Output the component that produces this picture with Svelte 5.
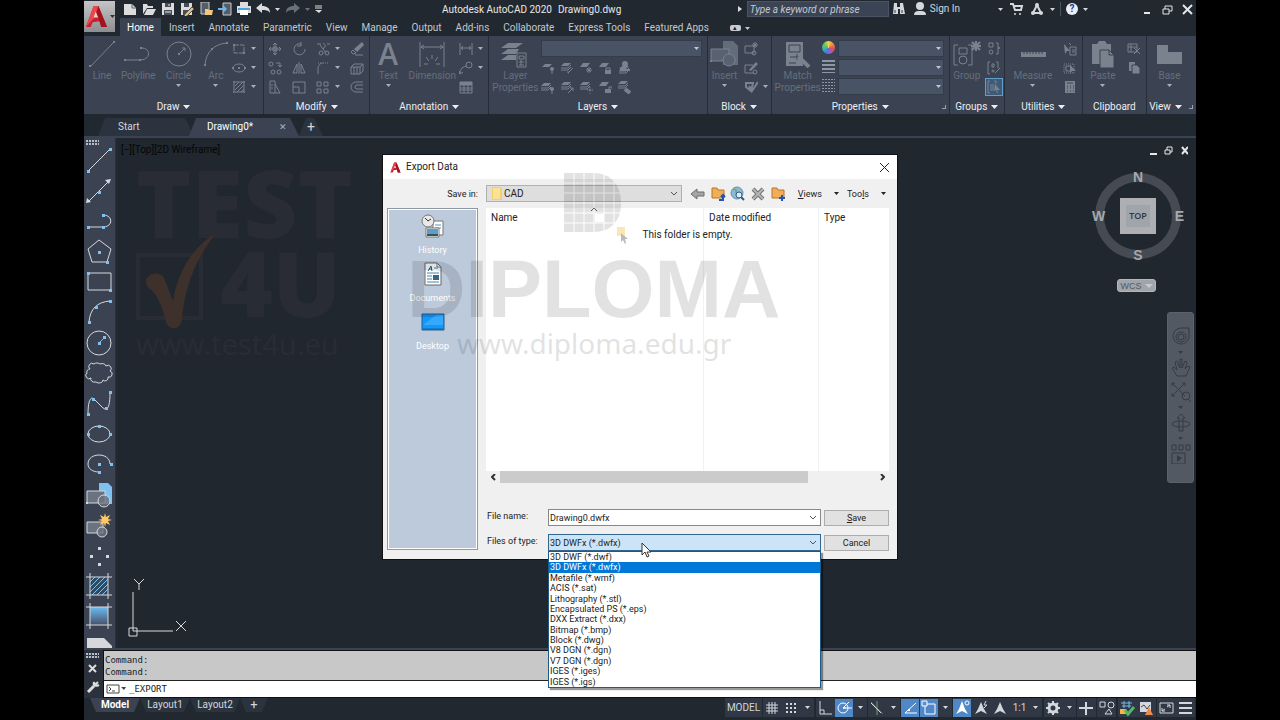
<script>
  const f = 'fill="currentColor" stroke="none"';
  const dot = (x, y) => `<rect x="${x - 1}" y="${y - 1}" width="2" height="2" ${f}/>`;
  const blue = (x, y) => `<rect x="${x - 1}" y="${y - 1}" width="3" height="3" fill="#7fc1f0" stroke="none"/>`;
  const sheet = (x, y) => `<path d="M${x + 3} ${y}h7l-3 3h-7z" ${f}/><path d="M${x} ${y + 5}h7l3-3M${x} ${y + 7}h7l3-3"/>`;

  // every drawing is in the pixel grid of the size it is shown at
  const icons = {
    // quick access, 14 x 14
    new: `<path d="M1 2h8l4 4v7H1z" ${f}/><path d="M9 2v4h4" stroke="#59616c"/>`,
    open: `<path d="M1 12V2h4l1 2h5v2H5z" ${f}/><path d="M5 7h9l-3 6H2z" ${f}/>`,
    save: `<path d="M1 1h12v12H1z" ${f}/><path d="M4 1h6v4H4zM3 8h8v5H3z" fill="#454d57" stroke="none"/><path d="M4 10h6M8 2v2" stroke="#eee"/>`,
    saveas: `<path d="M1 1h11v12H1z" ${f}/><path d="M4 1h5v4H4zM3 8h6v5H3z" fill="#454d57" stroke="none"/><path d="M5 12l7-7 2 2-7 7-3 1z" fill="#f0bd69" stroke="#555"/>`,
    openweb: `<path d="M2 0h8v12H2z" fill="#555d67" stroke="#ccc"/><path d="M6 13V7h3l1 1h4l-1 5z" fill="#f3c77f" stroke="none"/>`,
    saveweb: `<path d="M5 1h8v12H5z" fill="#555d67" stroke="#ccc"/><path d="M0 6h5V3l4 4-4 4V8H0z" fill="#68b7ef" stroke="none"/>`,
    plot: `<path d="M3 0h8v4H3zM0 4h14v7H0z" ${f}/><path d="M3 8h8v5H3z" fill="#fff" stroke="none"/><path d="M1 7h12" stroke="#4aa3df" stroke-width="2"/>`,
    undo: `<path d="M0 6l6-5v3c5 0 8 2 8 7-2-3-4-3-8-3v3z" ${f}/>`,
    redo: `<path d="M14 6L8 1v3C3 4 0 6 0 11c2-3 4-3 8-3v3z" ${f}/>`,
    custom: `<path d="M4 4h7M4 6h7"/><path d="M4 8h7l-3 3z" ${f}/>`,
    // large ribbon tools, 32 x 28
    line: `<path d="M5 26L27 3"/>${dot(4, 26)}${dot(28, 2)}`,
    polyline: `<path d="M3 20h15c11 0 11-12 2-12"/>${dot(3, 20)}${dot(18, 20)}${dot(19, 8)}`,
    circle: `<circle cx="16" cy="14" r="12"/><path d="M16 14l6-6m-3 0h3v3"/>${dot(16, 14)}`,
    arc: `<path d="M5 25C6 12 14 4 27 3"/>${dot(5, 25)}${dot(12, 9)}${dot(27, 3)}`,
    dimension: `<path d="M4 2v25M28 2v25M5 7h22M8 5L5 7l3 2m16-4l3 2-3 2M16 15v4m-6-2l3 4m9-4l-3 4m-11 3h4m8 0h4" />`,
    layerprops: `<path d="M9 3h15l-7 5H2zM9 9h11l-3 5H2zM9 15h8v5H2z" ${f}/><path d="M18 13h9v14h-9z" fill="#3b4353"/><path d="M20 16h5v3h-5zM20 22h5m-3-2v5m-2 0h5"/>`,
    insert: `<path d="M14 1h10l5 5v19H14z" ${f} opacity=".65"/><path d="M2 9h18v12H2z" fill="#596273"/><circle cx="20" cy="20" r="6" fill="#596273"/>${dot(2, 21)}`,
    match: `<path d="M4 2h17v24H4z" ${f}/><path d="M7 5h11v7H7zM8 17h9m-2-3v6m-8 3h7" stroke="#3b4353" fill="none"/><path d="M16 17l5 4 6 6" stroke-width="4"/>`,
    group: `<path d="M7 5H3v20h4M17 5h4v20h-4M8 8h8v6H8z"/><path d="M25 1v10M20 6h10M21 2l8 8m0-8l-8 8" stroke-width="2"/><circle cx="12" cy="20" r="4"/>`,
    measure: `<path d="M4 12h25v5H4z" ${f}/><path d="M7 12v2m3-2v2m3-2v2m3-2v2m3-2v2m3-2v2m3-2v2" stroke="#3b4353"/>`,
    paste: `<path d="M5 4h5l2-3h6l2 3h4v20H5z" ${f}/><path d="M13 10h9l5 5v13H13z" fill="currentColor" stroke="#3b4353"/><path d="M22 10v5h5" stroke="#3b4353"/>`,
    base: `<path d="M4 5h11v7h14v12H4z" ${f}/>`,
    // small ribbon tools, 14 x 14
    rect: `<path d="M2 3h10v8H2z" stroke-dasharray="5 1"/>${dot(2, 3)}${dot(12, 11)}`,
    ellipse: `<ellipse cx="7" cy="7" rx="6" ry="4"/>${dot(7, 7)}${dot(1, 7)}${dot(13, 7)}`,
    hatch: `<path d="M2 1v12M12 1v12M1 2h12M1 12h12M3 6l4-4M3 10l8-8M5 12l7-7M9 12l3-3"/>`,
    move: `<path d="M7 1v12M1 7h12M5 3l2-2 2 2M5 11l2 2 2-2M3 5L1 7l2 2M11 5l2 2-2 2M5 5h4v4H5z"/>`,
    rotate: `<path d="M9 2a5.500 5.500 0 1 0 4 5M9 0v4h-4"/>`,
    trim: `<path d="M1 2h4m2 0h2m2 0h3M4 3l6 8M10 3L7 7"/><circle cx="5" cy="11" r="2"/><circle cx="11" cy="11" r="2"/>`,
    erase: `<path d="M12 0l2 3-7 7-3-3z" ${f}/><path d="M3 8l3 3-3 1-2-2zM5 13h8"/>`,
    copy: `<circle cx="3" cy="3" r="2"/><circle cx="5" cy="11" r="2"/><circle cx="11" cy="11" r="2"/><path d="M8 2h4v4M10 4l2 2 2-2"/>`,
    mirror: `<path d="M5 3v9H1zM9 3v9h4zM7 1v12"/>`,
    fillet: `<path d="M2 13V8c0-4 2-6 6-6" /><path d="M9 2h4M2 2h3" stroke-dasharray="1 1"/>`,
    explode: `<path d="M1 6l3-3h9v7l-3 3H1zM1 6h9v7M10 6l3-3M4 6v7m3-7v7"/>`,
    stretch: `<path d="M2 1h5v12H2zM7 4l5 9H7"/><path d="M4 4v6" stroke-dasharray="2 1"/>`,
    scale: `<path d="M1 2h12v11H1zM1 7h6v6"/>`,
    array: `<path d="M1 2h4v4H1zM8 2h4v4H8zM1 9h4v4H1zM8 9h4v4H8z"/>`,
    offset: `<path d="M13 2H6a5 5 0 0 0 0 10h7M13 5H7a2 2 0 0 0 0 4h6"/>`,
    linear: `<path d="M1 1v12M13 1v12M2 6h10M4 4L2 6l2 2m6-4l2 2-2 2"/>`,
    leader: `<path d="M1 13c0-6 3-7 7-8M1 13l-1-3m1 3l3-2"/><circle cx="10" cy="4" r="3"/>`,
    table: `<path d="M1 2h12v11H1zM1 5h12M1 8h12M1 10h12M5 5v8M9 5v8"/><path d="M1 2h12v3H1z" ${f}/>`,
    lay1: `<path d="M4 3h7L8 6H1z" ${f}/><circle cx="11" cy="8" r="2" ${f}/><path d="M11 10v3"/>`,
    lay2: `${sheet(1, 2)}<path d="M8 12l5-5m-4 5H8v-2"/>`,
    lay3: `<path d="M4 2h7L8 6H1z" ${f}/><path d="M10 6v6M7 9h6M8 7l4 4m0-4l-4 4"/>`,
    lay4: `<path d="M4 2h7L8 6H1z" ${f}/><path d="M7 9h6v4H7z" ${f}/><path d="M8 9V7h4v2"/>`,
    lay5: `${sheet(2, 5)}<circle cx="8" cy="3" r="3" ${f}/><path d="M3 9h10" stroke-width="2"/>`,
    lay6: `${sheet(0, 3)}<circle cx="11" cy="9" r="2" ${f}/><path d="M11 11v3"/>`,
    lay7: `${sheet(1, 2)}<path d="M8 13l5-5m0 3V8h-3"/>`,
    lay8: `${sheet(1, 2)}<circle cx="11" cy="10" r="1"/><path d="M11 7v1m0 5v1m-3-4h1m4 0h1"/>`,
    lay9: `<path d="M4 2h7L8 6H1z" ${f}/><path d="M7 9h6v4H7z" ${f}/><path d="M11 9V7h3v2"/>`,
    lay10: `${sheet(1, 1)}<path d="M8 9l5 4" stroke-width="4"/>`,
    blkCreate: `<path d="M1 4h9v7H1z"/><circle cx="10" cy="11" r="2"/><path d="M11 0v6M8 3h6M9 1l4 4m0-4L9 5"/>`,
    blkEdit: `<path d="M9 4H1v8h9"/><path d="M5 9l7-8 2 2-7 7z" ${f}/><circle cx="11" cy="11" r="2"/>`,
    blkAttr: `<path d="M2 3h7l-2 8-5-4zM5 6l3 5 6-9" stroke-width="2"/>`,
    ungroup: `<path d="M2 1h4v4H2zM9 1h2v5h2-2v6H9"/><circle cx="4" cy="10" r="2"/>`,
    groupEdit: `<path d="M3 1H1v12h2M9 1h2v6M5 3h2v3H5zM8 12l5-5"/><circle cx="6" cy="10" r="1"/>`,
    groupSel: `<path d="M3 1H1v12h2M7 1h2v3M4 4v7m2-7v7"/><path d="M8 4l5 6-3 0 1 3-1 0-1-3-2 1z" ${f}/>`,
    quicksel: `<path d="M1 2l6 7H4l-2 3z" ${f}/><path d="M7 5h6v8H7zM9 8h3m-3 2h3M6 1l2 2"/>`,
    selall: `<path d="M1 3h10v9H1z" stroke-dasharray="1 1"/><path d="M3 5h5v5H3z"/><path d="M7 4l6 6H9l-2 3z" ${f}/>`,
    calc: `<path d="M2 1h10v12H2z" ${f}/><path d="M4 3h6M4 6h1m2 0h1m2 0h1M4 8h1m2 0h1m2 0h1M4 11h1m2 0h1m2 0h1" stroke="#3b4353"/>`,
    cut: `<path d="M1 2h9v8H1zM1 5h9M4 2v8M7 6l6 6m0-6l-6 6"/>`,
    copyclip: `<path d="M2 1h6v9H2z" ${f}/><path d="M5 4h5l3 3v6H5z" fill="currentColor" stroke="#3b4353"/>`,
    // drawing toolbar, 28 x 26
    tLine: `<path d="M3 24L25 2"/>${blue(3, 24)}${blue(25, 2)}`,
    tXline: `<path d="M4 23L23 4"/><path d="M26 1l-2 5-4-4zM1 25l1-5 4 4z" ${f}/>${blue(14, 14)}`,
    tPline: `<path d="M3 19h16c9-1 9-11 0-12"/>${blue(3, 19)}${blue(18, 19)}${blue(18, 7)}`,
    tPolygon: `<path d="M14 2l12 9-4 13H7L3 11z"/>${blue(14, 14)}${blue(22, 24)}`,
    tRect: `<path d="M3 4h23v17H3z"/>${blue(3, 4)}${blue(25, 21)}`,
    tArc: `<path d="M4 23C5 10 12 3 25 2"/>${blue(4, 23)}${blue(11, 8)}${blue(25, 2)}`,
    tCircle: `<circle cx="14" cy="13" r="12"/><path d="M14 13l6-6" stroke="#7fc1f0"/>${blue(14, 13)}${blue(19, 7)}`,
    tCloud: `<path d="M5 9a3 3 0 0 1 4-5 4 3 0 0 1 6 0 4 3 0 0 1 6 2 3 3 0 0 1 4 5 3 3 0 0 1-2 6 3 3 0 0 1-5 3 4 3 0 0 1-7 2 4 3 0 0 1-5-4 3 3 0 0 1-4-5 3 3 0 0 1 3-4z"/>`,
    tSpline: `<path d="M3 24C3 10 6 6 9 9l8 8c5 5 8 1 8-14"/>${blue(3, 24)}${blue(8, 9)}${blue(21, 18)}${blue(25, 2)}`,
    tEllipse: `<ellipse cx="14" cy="13" rx="11" ry="8"/>${blue(3, 13)}${blue(14, 5)}${blue(25, 13)}`,
    tEllArc: `<path d="M25 13C25 1 3 1 3 13c0 5 5 8 11 8"/>${blue(14, 13)}${blue(14, 21)}${blue(26, 13)}`,
    tInsert: `<path d="M14 1h9l4 4v17H14z" fill="#7fc1f0" stroke="none"/><path d="M2 9h18v12H2z" fill="#6c7380"/><circle cx="19" cy="19" r="6" fill="#6c7380" fill-opacity=".8"/>${dot(2, 21)}`,
    tBlock: `<path d="M2 10h16v11H2z" fill="#6c7380"/><circle cx="17" cy="20" r="5" fill="#6c7380" fill-opacity=".8"/><path d="M20 1l1 4 4-2-2 4 4 1-4 1 2 4-4-2-1 4-1-4-4 2 2-4-4-1 4-1-2-4 4 2z" fill="#ffc766" stroke="none"/>`,
    tPoint: [[14, 5], [6, 13], [22, 13], [14, 21]].map(([x, y]) => `<rect x="${x - 1}" y="${y - 1}" width="3" height="3" ${f}/>`).join(''),
    tHatch: `<path d="M5 4h18v18H5z" fill="#2d4b63" stroke="none"/><path d="M5 9l5-5M5 14L15 4M5 19L20 4M7 22L23 6M12 22l11-11M17 22l6-6" stroke="#7fc1f0"/><path d="M5 0v26M23 0v26M1 4h26M1 22h26"/>`,
    tGradient: `<defs><linearGradient id="tg" x2="0" y2="1"><stop stop-color="#6cbcf2"/><stop offset="1" stop-color="#47506a"/></linearGradient></defs><path d="M5 4h18v18H5z" fill="url(#tg)" stroke="none"/><path d="M5 0v26M23 0v26M1 4h26M1 22h26"/>`,
    tRegion: `<path d="M2 4h17l8 8v14h-8a5 5 0 0 0-10 0H2z" ${f}/>`,
    // status bar, 18 x 18
    grid: `<path d="M6 3v12M9 3v12M12 3v12M3 6h12M3 9h12M3 12h12"/>`,
    snap: [4, 8, 12].map((y) => [4, 8, 12].map((x) => dot(x + 1, y + 1)).join('')).join(''),
    ortho: `<path d="M4 2v13h12M4 11h4v4"/>`,
    polar: `<circle cx="8" cy="9" r="5"/><path d="M8 9h9M8 9l6-6M8 9h3"/>`,
    iso: `<path d="M3 3l12 12" stroke="#8a6a6e"/><path d="M9 2v14" stroke="#5fa564"/><path d="M3 4l10 10"/>`,
    track: `<path d="M15 4L4 14h12"/>${dot(8, 11)}`,
    osnap: `<path d="M5 5h10v10H5z"/><path d="M2 2h5v5H2z" fill="#5a92cf"/>`,
    ann: `<path d="M9 2l3 8 3 5-6-3-6 3 3-5z" ${f}/><circle cx="14" cy="4" r="2"/>`,
    ann2: `<path d="M9 3l3 7 3 5-6-3-6 3 3-5z" ${f}/><path d="M14 2l-2 4h3l-3 3"/>`,
    ann3: `<path d="M9 3l3 7 3 5-6-3-6 3 3-5z" ${f}/>`,
    gear: `<circle cx="9" cy="9" r="4" stroke-width="3"/><path d="M9 2v3m0 8v3M2 9h3m8 0h3M4 4l2 2m6 6l2 2m0-10l-2 2m-6 6l-2 2" stroke-width="2"/>`,
    plus: `<path d="M9 3v13M2 9h14" stroke-width="2"/>`,
    isolate: `<path d="M3 3h5v5H3zM8 15l4-5 3 5z"/><circle cx="14" cy="6" r="3"/>`,
    hardware: `<path d="M3 4h11M4 7h9M6 2v7m5-7v7" stroke="#74b8ee"/><path d="M2 10h6v5H2z" fill="#f3b54a" stroke="none"/><path d="M7 11l3 4 6-7" stroke="#54b567" stroke-width="3"/>`,
    perf: `<path d="M3 3h11v10H3z" ${f}/><path d="M4 8l3-2 3 4 3-4" stroke="#444"/><path d="M12 8l4 8H8z" fill="#ef8b42" stroke="none"/>`,
    clean: `<path d="M3 4h13v10H3zM10 8l3-2m0 3V6h-3M8 10l-3 2m0-3v3h3"/>`,
    menu: `<path d="M3 4h13M3 9h13M3 14h13" stroke-width="2"/>`,
    // navigation bar, 20 x 20
    wheel: `<path d="M10 1h8v9a8 8 0 1 1-8-9z"/><circle cx="10" cy="10" r="5"/><circle cx="10" cy="10" r="3"/>`,
    pan: `<path d="M6 18L1 10l2-1 3 3L4 4l2-1 3 7V1h2v9l3-7 2 1-2 7 3-3 2 1-4 9z"/>`,
    zoom: `<path d="M1 1l13 13M14 1L1 14M1 4V1h3m7 0h3v3M1 11v3h3M17 17l3 3"/><circle cx="15" cy="14" r="4"/>`,
    orbit: `<ellipse cx="10" cy="11" rx="9" ry="3"/><path d="M8 18V5H6l4-4 4 4h-2v13z"/>`,
    motion: `<path d="M1 1h4v5H1zM8 1h4v5H8zM15 1h4v5h-4zM1 9h13v11H1z"/><path d="M6 11l5 3-5 4z" ${f}/>`,
    // title bar right and dialog, 16 x 16
    find: `<path d="M3 2h3v4h3V2h3l2 11h-5V8H7v5H2z" ${f}/><path d="M4 9v3m7-3v3" stroke="#333b45"/>`,
    user: `<circle cx="8" cy="5" r="4" ${f}/><path d="M2 14c0-3 2-4 4-4h4c2 0 4 1 4 4z" ${f}/>`,
    cart: `<path d="M2 3h3l2 6h6l1-4H5" stroke-width="2"/><circle cx="7" cy="13" r="1" ${f}/><circle cx="12" cy="13" r="1" ${f}/>`,
    a360: `<path d="M8 4l4 8H4z" stroke-width="2"/><circle cx="8" cy="4" r="2" ${f}/><circle cx="4" cy="12" r="2" ${f}/><circle cx="12" cy="12" r="2" ${f}/>`,
    back: `<path d="M1 8l6-5v3h7v4H7v3z" fill="#a5a5a5" stroke="#6d6d6d"/>`,
    up: `<path d="M2 12V2h5l1 2h6v8z" fill="#f2ad55" stroke="#b5762a"/><path d="M9 14h4v-4m-2 1l2-2 2 2" stroke="#2355b8" stroke-width="2"/>`,
    web: `<circle cx="7" cy="7" r="6" fill="#8db9d6" stroke="#6a8ea6"/><path d="M3 4c3-2 4 2 3 4" stroke="#7aa887" stroke-width="2"/><circle cx="9" cy="9" r="3" fill="#d7edfb" stroke="#31588b"/><path d="M11 11l3 3" stroke="#31588b" stroke-width="2"/>`,
    del: `<path d="M3 3l10 10M13 3L3 13" stroke="#707070" stroke-width="4"/><path d="M3 3l10 10M13 3L3 13" stroke="#b5b5b5" stroke-width="2"/>`,
    newfolder: `<path d="M2 12V2h5l1 2h6v8z" fill="#f2ad55" stroke="#b5762a"/><path d="M12 9v6M9 12h6" stroke="#2355b8" stroke-width="2"/>`,
    // places, 24 x 24
    history: `<path d="M12 7h10v14H12z" fill="#fff" stroke="#777"/><path d="M14 11h6m-6 3h6" stroke="#5a8fbd"/><path d="M5 14h13v9H5z" fill="#fff" stroke="#777"/><path d="M6 15h11v7H6z" fill="#5d9ccd" stroke="none"/><path d="M6 20h11v2H6z" fill="#2d5b4d" stroke="none"/><circle cx="7" cy="7" r="6" fill="#e9e9e9" stroke="#777"/><path d="M4 4l3 3 3-2" stroke="#333"/>`,
    documents: `<path d="M4 1h12l4 4v18H4z" fill="#fff" stroke="#666"/><path d="M16 1v4h4M13 6h4M6 11h12M6 14h5M6 17h5M6 20h12" stroke="#4d83a3"/><path d="M7 9l3-5 1 5M8 7h3" stroke="#1d5f83"/><path d="M12 13h6v5h-6z" fill="#356787" stroke="none"/>`,
    desktop: `<path d="M1 4h22v16H1z" fill="#1497fa" stroke="#205f8e"/><path d="M2 15L15 5h7v10z" fill="#35a9ff" stroke="none"/><path d="M2 19h20" stroke="#1261a5"/>`,
  };

  const quick = ['new', 'open', 'save', 'saveas', 'openweb', 'saveweb', 'plot'];
  const tabs = ['Home', 'Insert', 'Annotate', 'Parametric', 'View', 'Manage', 'Output', 'Add-ins', 'Collaborate', 'Express Tools', 'Featured Apps'];

  // small: rows of [icon, has drop-down]
  const draw = {
    name: 'Draw', width: 179, more: true,
    big: [['line', 'Line', 34], ['polyline', 'Polyline', 36], ['circle', 'Circle', 42, true], ['arc', 'Arc', 30, true]],
    small: [[['rect', true]], [['ellipse', true]], [['hatch', true]]],
  };
  const modify = {
    name: 'Modify', width: 105, more: true, big: [],
    small: [
      [['move'], ['rotate'], ['trim', true], ['erase']],
      [['copy'], ['mirror'], ['fillet', true], ['explode']],
      [['stretch'], ['scale'], ['array', true], ['offset']],
    ],
  };
  const annotation = {
    name: 'Annotation', width: 118, more: true,
    big: [['A', 'Text', 34, true], ['dimension', 'Dimension', 50]],
    small: [[['linear', true]], [['leader', true]], [['table']]],
  };
  const layers = {
    name: 'Layers', width: 217, more: true, combos: 1,
    big: [['layerprops', 'Layer\nProperties', 46]],
    small: [
      [['lay1'], ['lay2'], ['lay3'], ['lay4'], ['lay5']],
      [['lay6'], ['lay7'], ['lay8'], ['lay9'], ['lay10']],
    ],
  };
  const block = {
    name: 'Block', width: 63, more: true,
    big: [['insert', 'Insert', 32, true]],
    small: [[['blkCreate']], [['blkEdit']], [['blkAttr', true]]],
  };
  const properties = {
    name: 'Properties', width: 177, more: true, corner: true, combos: 3, marks: true,
    big: [['match', 'Match\nProperties', 46]], small: [],
  };
  const groups = {
    name: 'Groups', width: 54, more: true,
    big: [['group', 'Group', 32]],
    small: [[['ungroup']], [['groupEdit']], [['groupSel', false, true]]],
  };
  const utilities = {
    name: 'Utilities', width: 77, more: true,
    big: [['measure', 'Measure', 54, true]],
    small: [[['quicksel']], [['selall']], [['calc']]],
  };
  const clipboard = {
    name: 'Clipboard', width: 63,
    big: [['paste', 'Paste', 38, true]],
    small: [[['cut']], [['copyclip']]],
  };
  const view = { name: 'View', width: 49, more: true, corner: true, big: [['base', 'Base', 46, true]], small: [] };
  const panels = [draw, modify, annotation, layers, block, properties, groups, utilities, clipboard, view];

  const toolbar = ['tLine', 'tXline', 'tPline', 'tPolygon', 'tRect', 'tArc', 'tCircle', 'tCloud', 'tSpline', 'tEllipse', 'tEllArc', 'tInsert', 'tBlock', 'tPoint', 'tHatch', 'tGradient', 'tRegion'];
  const nav = [['wheel', true], ['pan'], ['zoom', true], ['orbit', true], ['motion']];
  const status = [
    ['grid', 'snap', 'v'], ['ortho', '*polar', 'v'], ['iso', 'v'], ['*track', '*osnap', 'v'],
    ['*ann', 'ann2', 'ann3', '1:1', 'v'], ['gear', 'v'], ['plus'], ['isolate'], ['hardware', 'perf'], ['clean', 'menu'],
  ];
  const places = [['history', 'History'], ['documents', 'Documents'], ['desktop', 'Desktop']];
  const types = [
    '3D DWF (*.dwf)', '3D DWFx (*.dwfx)', 'Metafile (*.wmf)', 'ACIS (*.sat)', 'Lithography (*.stl)',
    'Encapsulated PS (*.eps)', 'DXX Extract (*.dxx)', 'Bitmap (*.bmp)', 'Block (*.dwg)', 'V8 DGN (*.dgn)',
    'V7 DGN (*.dgn)', 'IGES (*.iges)', 'IGES (*.igs)',
  ];
  let type = $state('3D DWFx (*.dwfx)');
  let fileName = $state('Drawing0.dwfx');
</script>

{#snippet icon(name, w = 14, h = w)}
  <svg width={w} height={h} viewBox="0 0 {w} {h}" fill="none" stroke="currentColor" aria-hidden="true">{@html icons[name]}</svg>
{/snippet}

{#snippet caret()}
  <svg class="caret" width="5" height="3" viewBox="0 0 5 3" aria-hidden="true"><path d="M0 0h5L2.500 3z" fill="currentColor" /></svg>
{/snippet}

{#snippet logo(size)}
  <svg width={size} height={size} viewBox="0 0 24 24" aria-hidden="true">
    <path d="M1 23L9 1h5l9 22h-6l-2-6-7 1-2 5z" fill="#c9202c" />
    <path d="M9 1h5l-3 11-10 11z" fill="#e8474d" />
    <path d="M11 7l3 6H9z" fill="#fff" opacity=".75" />
    <path d="M14 1l9 22h-6L12 7z" fill="#a1141f" />
  </svg>
{/snippet}

<div class="screen">
  <div class="app">
    <header>
      <button class="appmenu" aria-label="Application menu">{@render logo(23)}{@render caret()}</button>
      <div class="head">
        <div class="titlebar">
          <div class="quick">
            {#each quick as q}
              <button aria-label={q}>{@render icon(q)}</button>
            {/each}
            <button aria-label="Undo">{@render icon('undo')}</button>
            <span class="drop">{@render caret()}</span>
            <button class="dim" aria-label="Redo">{@render icon('redo')}</button>
            <span class="drop dim">{@render caret()}</span>
            <button class="last" aria-label="Customize">{@render icon('custom')}</button>
          </div>
          <p class="apptitle"><span>Autodesk AutoCAD 2020</span><span>Drawing0.dwg</span></p>
          <div class="account">
            <svg width="4" height="6" viewBox="0 0 4 6" aria-hidden="true"><path d="M0 0l4 3-4 3z" fill="#ddd" /></svg>
            <input type="text" placeholder="Type a keyword or phrase" aria-label="Search" />
            <button aria-label="Find">{@render icon('find', 16)}</button>
            <button class="signin">{@render icon('user', 16)}Sign In</button>
            {@render caret()}
            <button aria-label="App Store">{@render icon('cart', 16)}</button>
            <button aria-label="Autodesk A360">{@render icon('a360', 16)}</button>
            {@render caret()}
            <span class="sep"></span>
            <button class="help" aria-label="Help">?</button>
            {@render caret()}
          </div>
          <div class="winctl">
            <button aria-label="Minimize"><svg width="11" height="11" viewBox="0 0 11 11"><path d="M2 9h6" stroke="currentColor" stroke-width="2" /></svg></button>
            <button aria-label="Restore"><svg width="11" height="11" viewBox="0 0 11 11" fill="none" stroke="currentColor"><path d="M1 5h6v5H1zM3 5V2h7v5H7" /></svg></button>
            <button aria-label="Close"><svg width="11" height="11" viewBox="0 0 11 11"><path d="M1 1l9 9M10 1l-9 9" stroke="currentColor" stroke-width="2" /></svg></button>
          </div>
        </div>
        <nav class="tabs">
          {#each tabs as tab, i}
            <button class:active={i === 0}>{tab}</button>
          {/each}
          <button class="mini" aria-label="Minimize ribbon"><span>▴</span>{@render caret()}</button>
        </nav>
      </div>
    </header>

    <section class="ribbon">
      {#each panels as p}
        <div class="panel" style="flex: {p.width} 1 {p.width}px">
          <div class="body {p.name.toLowerCase()}">
            {#each p.big as [name, label, width, drop]}
              <button class="big" style="width: {width}px">
                {#if name === 'A'}<b class="letter">A</b>{:else}{@render icon(name, 32, 28)}{/if}
                <span>{label}</span>
                {#if drop}{@render caret()}{/if}
              </button>
            {/each}
            {#if p.marks}
              <div class="marks">
                <i class="wheel"></i><i class="weights"></i><i class="types"></i>
              </div>
            {/if}
            {#if p.combos || p.small.length}
              <div class="small">
                {#each Array(p.combos ?? 0) as _}
                  <label class="combo"><select aria-label={p.name}></select>{@render caret()}</label>
                {/each}
                {#each p.small as row}
                  <div class="row">
                    {#each row as [name, drop, on]}
                      <button class:on aria-label={name}>{@render icon(name)}{#if drop}{@render caret()}{/if}</button>
                    {/each}
                  </div>
                {/each}
              </div>
            {/if}
          </div>
          <div class="title">
            {p.name}
            {#if p.more}<svg width="7" height="4" viewBox="0 0 7 4" aria-hidden="true"><path d="M0 0h7L3.500 4z" fill="currentColor" /></svg>{/if}
            {#if p.corner}<span class="corner"></span>{/if}
          </div>
        </div>
      {/each}
    </section>

    <nav class="docs">
      <button class="doc start">Start</button>
      <button class="doc current">Drawing0*<span>✕</span></button>
      <button class="doc add" aria-label="New drawing">+</button>
    </nav>

    <main>
      <aside class="tools">
        <span class="grip"></span>
        <div class="toollist">
          {#each toolbar as t}
            <button aria-label={t.slice(1)}>{@render icon(t, 28, 26)}</button>
          {/each}
        </div>
      </aside>

      <section class="canvas">
        <p class="viewlabel">[−][Top][2D Wireframe]</p>
        <div class="brand">
          <div class="test">TEST</div>
          <div class="four">
            <svg width="84" height="98" viewBox="0 0 84 98" aria-hidden="true">
              <path d="M2 22h63v63H2z" fill="none" stroke="#292c35" stroke-width="4" />
              <path d="M10 48c1-9 15-10 18-3l9 23c5-33 23-56 43-68-20 26-31 52-34 86-1 12-13 12-16 3-4-16-9-28-16-33-3-2-4-4-4-8z" fill="#3e302a" />
            </svg>
            <span>4U</span>
          </div>
          <div class="site">www.test4u.eu</div>
        </div>
        <div class="viewctl">
          <svg width="38" height="10" viewBox="0 0 38 10" fill="none" stroke="#e8e8e8" aria-hidden="true">
            <path d="M0 8h7M32 1l6 7m0-7l-6 7" stroke-width="2" /><path d="M15 4h5v4h-5zM17 4V1h5v5h-2" />
          </svg>
        </div>
        <div class="cube">
          <i class="ring"></i>
          <b class="n">N</b><b class="w">W</b><b class="e">E</b><b class="s">S</b>
          <span class="face"><span>TOP</span></span>
        </div>
        <button class="wcs">WCS <svg width="8" height="4" viewBox="0 0 8 4" aria-hidden="true"><path d="M0 0h8L4 4z" fill="#c5c8ce" /></svg></button>
        <div class="navbar">
          {#each nav as [name, drop]}
            <button aria-label={name}>{@render icon(name, 20)}</button>
            {#if drop}{@render caret()}{/if}
          {/each}
        </div>
        <svg class="ucs" width="62" height="62" viewBox="0 0 62 62" fill="none" stroke="#d9dadb" aria-hidden="true">
          <path d="M7 53V14M7 53h40M3 50h8v8H3zM8 1l5 5 5-5M13 6v6M50 43l10 10M60 43L50 53" />
        </svg>
      </section>
    </main>

    <section class="command">
      <div class="cmdside">
        <span class="grip"></span>
        <svg width="12" height="10" viewBox="0 0 12 10" stroke="#ddd" stroke-width="2" aria-hidden="true"><path d="M3 1l7 7M10 1L3 8" /></svg>
        <svg width="14" height="13" viewBox="0 0 14 13" fill="none" stroke="#ddd" aria-hidden="true"><path d="M2 12l6-6" stroke-width="3" /><path d="M12 2L9 5 8 2M8 2c-1 3 1 5 5 3" stroke-width="2" /></svg>
      </div>
      <div class="cmdmain">
        <div class="log">Command:<br />Command:</div>
        <label class="prompt">
          <svg width="20" height="10" viewBox="0 0 20 10" fill="none" stroke="#444" aria-hidden="true"><path d="M1 1h12v8H1zM3 3l2 2-2 2M6 7h3" /><path d="M15 3h5l-2 3z" fill="#444" stroke="none" /></svg>
          <input type="text" value="_EXPORT" aria-label="Command" />
        </label>
      </div>
    </section>

    <footer>
      <nav class="layouts">
        <button class="active">Model</button><button>Layout1</button><button>Layout2</button><button class="plus">+</button>
      </nav>
      <div class="status">
        <button class="model">MODEL</button>
        {#each status as group}
          <div class="group">
            {#each group as s}
              {#if s === 'v'}
                <span class="sdrop">{@render caret()}</span>
              {:else if s === '1:1'}
                <button>1:1</button>
              {:else}
                <button class:on={s[0] === '*'} aria-label={s.replace('*', '')}>{@render icon(s.replace('*', ''), 18)}</button>
              {/if}
            {/each}
          </div>
        {/each}
      </div>
    </footer>
  </div>

  <div class="dialog" role="dialog" aria-label="Export Data">
    <div class="dtitle">
      {@render logo(11)}<span>Export Data</span>
      <button aria-label="Close"><svg width="9" height="9" viewBox="0 0 9 9"><path d="M0 0l9 9M9 0L0 9" stroke="#222" /></svg></button>
    </div>
    <div class="dbar">
      <label for="folder">Save in:</label>
      <div class="dselect folder">
        <svg width="10" height="13" viewBox="0 0 10 13" aria-hidden="true"><path d="M0 0h8l2 2v11H0z" fill="#f3cf66" /><path d="M1 1h7v11H1z" fill="#fce294" /></svg>
        <select id="folder"><option>CAD</option></select>
        <svg class="chev" width="7" height="4" viewBox="0 0 7 4" fill="none" stroke="#555"><path d="M0 0l3 3 3-3" /></svg>
      </div>
      <div class="dtools">
        {#each ['back', 'up', 'web', 'del', 'newfolder'] as t}
          <button aria-label={t}>{@render icon(t, 16)}</button>
        {/each}
      </div>
      <div class="dmenus">
        <button><span><u>V</u>iews</span>{@render caret()}</button>
        <button><span>Too<u>l</u>s</span>{@render caret()}</button>
      </div>
    </div>
    <div class="dbody">
      <div class="places">
        {#each places as [name, label]}
          <button>{@render icon(name, 24)}<span>{label}</span></button>
        {/each}
      </div>
      <div class="dmain">
        <div class="files">
          <table>
            <thead>
              <tr><th class="cname">Name</th><th class="cdate">Date modified</th><th>Type</th></tr>
            </thead>
            <tbody><tr><td></td><td></td><td></td></tr></tbody>
          </table>
          <svg class="sort" width="7" height="4" viewBox="0 0 7 4" fill="none" stroke="#666"><path d="M0 3l3-3 3 3" /></svg>
          <p>This folder is empty.</p>
        </div>
        <div class="scroll">
          <button aria-label="Scroll left"><svg width="5" height="7" viewBox="0 0 5 7" fill="none" stroke="#333" stroke-width="2"><path d="M4 0L1 3l3 3" /></svg></button>
          <div class="track"><i></i></div>
          <button aria-label="Scroll right"><svg width="5" height="7" viewBox="0 0 5 7" fill="none" stroke="#333" stroke-width="2"><path d="M1 0l3 3-3 3" /></svg></button>
        </div>
        <div class="form">
          <label for="fname">File name:</label>
          <div class="dselect">
            <input id="fname" type="text" bind:value={fileName} />
            <svg class="chev" width="7" height="4" viewBox="0 0 7 4" fill="none" stroke="#555"><path d="M0 0l3 3 3-3" /></svg>
          </div>
          <button class="push"><span><u>S</u>ave</span></button>
          <label for="ftype">Files of type:</label>
          <div class="dselect type">
            <select id="ftype" bind:value={type}>
              {#each types as t}<option>{t}</option>{/each}
            </select>
            <svg class="chev" width="7" height="4" viewBox="0 0 7 4" fill="none" stroke="#555"><path d="M0 0l3 3 3-3" /></svg>
            <ul class="options" role="listbox" aria-label="Files of type">
              {#each types as t}
                <li role="option" aria-selected={t === type} class:selected={t === type}>{t}</li>
              {/each}
            </ul>
          </div>
          <button class="push">Cancel</button>
        </div>
      </div>
    </div>
    <div class="diploma">
      <svg width="60" height="60" viewBox="0 0 60 60" aria-hidden="true">
        <path d="M0 0h29c18 0 28 12 28 30S47 59 29 59H0z" fill="#000" />
        <path d="M10 0v60M20 0v60M30 0v60M40 0v60M50 0v60M0 10h60M0 20h60M0 30h60M0 40h60M0 50h60" stroke="#fff" />
        <path d="M31 41h9v8h-9z" fill="#fff" />
      </svg>
      <div class="word">DIPLOMA</div>
      <div class="site">www.diploma.edu.gr</div>
    </div>
    <svg class="ghost" width="12" height="17" viewBox="0 0 12 17" aria-hidden="true"><path d="M1 0h8v9H1z" fill="#fbe6b4" /><path d="M5 6v9l2-2 2 4 1-1-1-4h3z" fill="#bbb" /></svg>
    <svg class="pointer" width="11" height="17" viewBox="0 0 11 17" aria-hidden="true"><path d="M1 1v12l3-3 2 5 2-1-2-4h4z" fill="#fff" stroke="#333" /></svg>
  </div>
</div>

<style>
  :global(body) {
    margin: 0;
    background: #000;
  }
  .screen {
    position: relative;
    display: flex;
    min-height: 100vh;
    padding: 0 84px;
    box-sizing: border-box;
    overflow: hidden;
    font: 10px/12px Roboto, 'Open Sans', sans-serif;
    color: #d4d7dc;
  }
  .screen * {
    box-sizing: border-box;
  }
  button,
  input,
  select {
    margin: 0;
    padding: 0;
    border: 0;
    border-radius: 0;
    background: none;
    color: inherit;
    font: inherit;
    appearance: none;
    outline: none;
  }
  button {
    display: flex;
    align-items: center;
    justify-content: center;
  }
  p,
  ul {
    margin: 0;
    padding: 0;
    list-style: none;
  }
  svg {
    display: block;
    flex: none;
  }
  .app {
    flex: 1;
    min-width: 0;
    display: flex;
    flex-direction: column;
    background: #212830;
  }

  /* title bar and ribbon tabs */
  header {
    display: flex;
    height: 36px;
  }
  .appmenu {
    width: 31px;
    height: 31px;
    margin-top: 1px;
    gap: 2px;
    background: linear-gradient(#c5c5c5, #8c8e91);
    color: #333;
  }
  .head {
    flex: 1;
    display: flex;
    flex-direction: column;
  }
  .titlebar {
    display: flex;
    align-items: center;
    height: 18px;
  }
  .quick {
    display: flex;
    flex: 0 0 327px;
    gap: 5px;
    padding-left: 8px;
    align-items: center;
    color: #dcdcdc;
  }
  .drop {
    width: 6px;
  }
  .quick .dim {
    color: #69717b;
  }
  .quick .last {
    margin-left: -5px;
  }
  .apptitle {
    display: flex;
    flex: 1;
    gap: 6px;
    padding-top: 1px;
    color: #e6e8ea;
    white-space: nowrap;
  }
  .account {
    display: flex;
    align-items: center;
    gap: 5px;
    padding-right: 54px;
  }
  .account input {
    width: 142px;
    height: 16px;
    margin-right: -3px;
    padding-left: 2px;
    border: 1px solid #4a5465;
    background: #3b4454;
  }
  .account input::placeholder {
    color: #c4cad2;
    font-style: italic;
    opacity: 1;
  }
  .signin {
    gap: 2px;
    margin-right: 33px;
  }
  .sep {
    width: 1px;
    height: 14px;
    background: #4b535e;
  }
  .help {
    width: 12px;
    height: 12px;
    border-radius: 6px;
    background: #e9eefb;
    color: #203a8c;
    font-weight: bold;
  }
  .winctl {
    display: flex;
    gap: 9px;
    padding-right: 3px;
    color: #e6e6e6;
  }
  .tabs {
    display: flex;
    height: 18px;
    padding-left: 5px;
  }
  .tabs button {
    padding: 2px 7px 0;
    color: #c3c8cf;
  }
  .tabs .active {
    margin-right: 1px;
    background: #3b4353;
    color: #fff;
  }
  .tabs .mini {
    gap: 4px;
    margin-left: 7px;
  }
  .mini span {
    width: 11px;
    height: 6px;
    border-radius: 2px;
    background: #c9cdd3;
    color: #222;
    font-size: 7px;
    line-height: 6px;
  }

  /* ribbon */
  .ribbon {
    display: flex;
    gap: 1px;
    height: 78px;
    background: #262d38;
  }
  .panel {
    display: flex;
    flex-direction: column;
    min-width: 0;
    background: #3b4353;
  }
  .body {
    display: flex;
    flex: 1;
    justify-content: space-between;
    padding: 3px 5px 0 1px;
    color: #7a828e;
  }
  .body.draw {
    padding-right: 7px;
  }
  .body.groups,
  .body.block {
    padding-right: 3px;
  }
  .body.layers,
  .body.properties {
    padding-left: 3px;
  }
  .big {
    flex-direction: column;
    justify-content: flex-start;
    padding-top: 1px;
    color: #7a828e;
    line-height: 12px;
    white-space: pre-line;
  }
  .big span {
    margin: 2px 0;
    color: #656e7b;
  }
  .big .caret {
    color: #aab0b9;
  }
  .letter {
    height: 28px;
    font: 600 30px/28px 'Open Sans', sans-serif;
  }
  .small {
    display: flex;
    flex-direction: column;
  }
  .body.modify .small,
  .body.properties .small,
  .body.layers .small {
    flex: 1;
    padding-left: 3px;
  }
  .row {
    display: flex;
    gap: 5px;
    height: 19px;
    align-items: center;
  }
  .row button {
    gap: 5px;
    height: 18px;
  }
  .row .caret {
    color: #aab0b9;
  }
  .modify .row {
    justify-content: space-between;
  }
  .row .on {
    margin: 0 -2px;
    padding: 0 1px;
    border: 1px solid #5f9fc9;
    background: #3d5a78;
  }
  .combo {
    display: flex;
    align-items: center;
    height: 17px;
    margin: 1px 0;
    padding-right: 2px;
    border: 1px solid #343c4a;
    background: #485365;
    color: #c3c8cf;
  }
  .combo select {
    flex: 1;
    min-width: 0;
  }
  .marks {
    display: flex;
    flex-direction: column;
    gap: 6px;
    padding: 2px 0 0 1px;
  }
  .marks i {
    width: 13px;
    height: 13px;
  }
  .wheel {
    border-radius: 7px;
    background: conic-gradient(#f4cf4c, #f18c3c, #e0504f, #a35bc0, #3f7fe0, #3cb8a8, #6cc45a, #f4cf4c);
  }
  .weights {
    background: repeating-linear-gradient(#8f97a2 0 2px, transparent 2px 4px);
  }
  .types {
    background: repeating-linear-gradient(90deg, transparent 0 2px, #3b4353 2px 3px), repeating-linear-gradient(#8f97a2 0 1px, transparent 1px 3px);
  }
  .title {
    position: relative;
    display: flex;
    align-items: center;
    justify-content: center;
    gap: 4px;
    height: 16px;
    padding-top: 1px;
    color: #eceef0;
  }
  .corner {
    position: absolute;
    right: 3px;
    width: 4px;
    height: 4px;
    border: solid #9ba2ad;
    border-width: 0 1px 1px 0;
  }
  .view + .title {
    padding-right: 12px;
  }

  /* drawing tabs */
  .docs {
    display: flex;
    align-items: flex-end;
    height: 24px;
    padding-left: 14px;
    border-bottom: 2px solid #3b4353;
  }
  .doc {
    height: 18px;
    background: #2b333e;
    clip-path: polygon(7px 0, calc(100% - 9px) 0, 100% 100%, 0 100%);
  }
  .start {
    width: 96px;
    justify-content: flex-start;
    padding-left: 20px;
  }
  .current {
    width: 110px;
    margin-left: -5px;
    gap: 26px;
    padding-left: 6px;
    background: #3b4353;
    color: #fff;
  }
  .current span {
    color: #adb3bc;
    font-size: 9px;
  }
  .add {
    width: 24px;
    font-size: 14px;
  }

  /* workspace */
  main {
    flex: 1;
    display: flex;
    min-height: 0;
  }
  .tools {
    width: 32px;
    height: 510px;
    padding-top: 2px;
    overflow: hidden;
    background: #3b4353;
    border-right: 1px solid #2a313c;
  }
  .grip {
    display: block;
    width: 13px;
    height: 5px;
    margin-left: 2px;
    background: repeating-linear-gradient(90deg, transparent 0 2px, #3b4353 2px 3px), repeating-linear-gradient(#b9bec6 0 2px, transparent 2px 3px);
  }
  .toollist {
    display: grid;
    grid-auto-rows: 1fr;
    justify-content: start;
    height: 517px;
    padding-left: 1px;
    color: #d6d8dc;
  }
  .canvas {
    position: relative;
    flex: 1;
    margin-left: 2px;
    overflow: hidden;
    background: #20272e;
  }
  .viewlabel {
    padding: 6px 3px;
    color: #050607;
  }
  .brand {
    position: absolute;
    left: 18px;
    top: 20px;
    color: #292c35;
  }
  .test {
    font: 800 94px/88px 'Open Sans', sans-serif;
    height: 75px;
  }
  .four {
    display: flex;
    font: 800 90px/98px 'Open Sans', sans-serif;
    height: 94px;
  }
  .brand .site {
    font: 29px/34px 'Noto Sans', sans-serif;
  }
  .viewctl {
    position: absolute;
    right: 8px;
    top: 8px;
  }
  .cube {
    position: absolute;
    right: 12px;
    top: 32px;
    width: 92px;
    height: 92px;
    color: #a5a9ae;
    font: bold 14px/14px 'Liberation Sans', sans-serif;
  }
  .ring {
    position: absolute;
    inset: 3px;
    border: 9px solid #454a53;
    border-radius: 50%;
  }
  .cube b {
    position: absolute;
  }
  .n,
  .s {
    left: 0;
    right: 0;
    text-align: center;
  }
  .n {
    top: 0;
  }
  .s {
    bottom: 0;
  }
  .w,
  .e {
    top: 39px;
  }
  .w {
    left: 0;
  }
  .e {
    right: 0;
  }
  .face {
    position: absolute;
    inset: 28px;
    display: flex;
    padding: 7px 6px;
    background: #adafb3;
  }
  .face span {
    display: flex;
    flex: 1;
    justify-content: center;
    background: #9fa5ab;
    color: #31363d;
    font: 600 9px/22px 'Open Sans', sans-serif;
  }
  .wcs {
    position: absolute;
    right: 40px;
    top: 141px;
    gap: 3px;
    width: 39px;
    height: 13px;
    border: 1px solid #b4b8be;
    border-radius: 3px;
    background: #a0a4ab;
    color: #545a63;
    font: 9px/10px 'Liberation Sans', sans-serif;
  }
  .navbar {
    position: absolute;
    right: 2px;
    top: 174px;
    display: flex;
    flex-direction: column;
    align-items: center;
    gap: 4px;
    width: 27px;
    height: 171px;
    padding-top: 14px;
    border: 1px solid #5c626b;
    border-radius: 3px;
    background: #535963;
    color: #353b45;
  }
  .ucs {
    position: absolute;
    left: 8px;
    bottom: 8px;
  }

  /* command line */
  .command {
    display: flex;
    height: 50px;
    border-top: 2px solid #3b4353;
  }
  .cmdside {
    display: flex;
    flex-direction: column;
    gap: 6px;
    width: 19px;
    padding-top: 3px;
    background: #2b313d;
  }
  .cmdside svg {
    margin-left: 2px;
  }
  .cmdmain {
    flex: 1;
    border: 1px solid #111;
    border-right: 0;
    background: #fff;
    font: 9px/12px 'DejaVu Sans Mono', monospace;
    color: #222;
  }
  .log {
    height: 30px;
    padding: 3px 1px 0;
    border-bottom: 1px solid #222;
    background: #c8c8c8;
  }
  .prompt {
    display: flex;
    align-items: center;
    gap: 3px;
    height: 16px;
    padding-left: 2px;
  }
  .prompt input {
    flex: 1;
  }

  footer {
    display: flex;
    justify-content: space-between;
    height: 23px;
    background: #212830;
  }
  .layouts {
    display: flex;
    padding-left: 6px;
  }
  .layouts button {
    width: 50px;
    height: 14px;
    background: #2b333e;
    clip-path: polygon(0 0, 100% 0, calc(100% - 6px) 100%, 6px 100%);
  }
  .layouts .active {
    background: #3b4353;
    color: #fff;
    font-weight: bold;
  }
  .layouts .plus {
    width: 28px;
    font-size: 13px;
  }
  .status {
    display: flex;
    flex: 0 1 471px;
    justify-content: space-between;
    padding: 0 1px 4px 0;
  }
  .group,
  .model {
    display: flex;
    align-items: center;
    background: #303846;
  }
  .model {
    width: 37px;
  }
  .group button {
    min-width: 18px;
    height: 18px;
    margin-right: 1px;
  }
  .group .on {
    background: #5088c7;
    color: #fff;
  }
  .sdrop {
    padding: 0 4px;
  }

  /* export dialog */
  .dialog {
    position: absolute;
    top: 155px;
    left: 0;
    right: 0;
    width: 514px;
    margin: 0 auto;
    display: flex;
    flex-direction: column;
    background: #f0f0f0;
    outline: 1px solid #111;
    color: #222;
  }
  .dtitle {
    display: flex;
    align-items: center;
    gap: 5px;
    height: 24px;
    padding: 0 8px 0 7px;
    background: #fff;
  }
  .dtitle button {
    margin-left: auto;
  }
  .dbar {
    display: flex;
    align-items: center;
    height: 29px;
    padding: 0 8px 0 4px;
  }
  .dbar label {
    width: 91px;
    text-align: right;
    font-size: 9px;
  }
  .dselect {
    position: relative;
    display: flex;
    align-items: center;
    height: 17px;
    padding: 0 3px;
    border: 1px solid #888;
    background: #fff;
    font-size: 9px;
  }
  .dselect input,
  .dselect select {
    flex: 1;
    min-width: 0;
  }
  .folder {
    flex: 0 0 196px;
    gap: 2px;
    margin-left: 8px;
    padding-left: 5px;
    border-color: #b0b0b0;
    background: #dedede;
    font-size: 10px;
  }
  .dtools {
    display: flex;
    gap: 4px;
    margin-left: 8px;
  }
  .dmenus {
    display: flex;
    flex: 1;
    justify-content: flex-end;
    gap: 8px;
    padding-right: 3px;
    font-size: 9px;
  }
  .dmenus button {
    gap: 12px;
  }
  .dbody {
    display: flex;
    gap: 8px;
    padding: 0 8px 8px 4px;
  }
  .places {
    display: flex;
    flex-direction: column;
    gap: 6px;
    width: 91px;
    margin-bottom: 1px;
    padding-top: 5px;
    border: 1px solid #8f97a3;
    outline: 1px solid #fff;
    outline-offset: -2px;
    background: #bdcadb;
    color: #fff;
    font-size: 9px;
  }
  .places button {
    flex-direction: column;
    gap: 6px;
  }
  .dmain {
    flex: 1;
    display: flex;
    flex-direction: column;
  }
  .files {
    position: relative;
    display: flex;
    height: 263px;
    background: #fff;
  }
  table {
    flex: 1;
    height: 100%;
    border-collapse: collapse;
    table-layout: fixed;
  }
  th {
    height: 19px;
    padding: 0 5px;
    font-weight: normal;
    text-align: left;
  }
  td,
  th {
    border-right: 1px solid #eef2f5;
  }
  td:last-child,
  th:last-child {
    border: 0;
  }
  .cname {
    width: 54%;
  }
  .cdate {
    width: 115px;
  }
  .sort {
    position: absolute;
    top: 0;
    left: 26%;
  }
  .files p {
    position: absolute;
    top: 21px;
    left: 0;
    right: 0;
    text-align: center;
  }
  .scroll {
    display: flex;
    height: 13px;
  }
  .scroll button {
    width: 14px;
  }
  .track {
    flex: 1;
  }
  .track i {
    display: block;
    width: 82%;
    height: 12px;
    background: #cbcbcb;
  }
  .form {
    display: grid;
    grid-template-columns: 58px 1fr 65px;
    align-items: center;
    gap: 8px 3px;
    margin-top: 25px;
    padding-left: 1px;
    font-size: 9px;
  }
  .form label {
    padding-bottom: 4px;
    white-space: nowrap;
  }
  .form .dselect {
    padding-left: 1px;
  }
  .push {
    height: 16px;
    border: 1px solid #adadad;
    background: #e1e1e1;
  }
  .form .type {
    border-color: #33668f;
    background: #cce4f7;
  }
  .options {
    position: absolute;
    top: 16px;
    left: -1px;
    right: -1px;
    z-index: 2;
    display: grid;
    grid-auto-rows: 1fr;
    height: 137px;
    border: 1px solid #1d5a8c;
    background: #fff;
    box-shadow: 2px 2px 1px #0006;
  }
  .options li {
    padding-left: 1px;
    line-height: 11px;
    min-height: 0;
  }
  .options .selected {
    background: #0078d7;
    color: #fff;
  }
  .diploma {
    position: absolute;
    left: 24px;
    top: 18px;
    opacity: 0.11;
    color: #000;
    pointer-events: none;
  }
  .diploma svg {
    margin-left: 157px;
  }
  .word {
    margin-top: 14px;
    font: bold 81px/84px 'Liberation Sans', sans-serif;
  }
  .diploma .site {
    padding-left: 50px;
    font: 28px/24px 'Noto Sans', sans-serif;
  }
  .ghost {
    position: absolute;
    left: 233px;
    top: 72px;
  }
  .pointer {
    position: absolute;
    left: 258px;
    top: 387px;
    z-index: 3;
  }
</style>
